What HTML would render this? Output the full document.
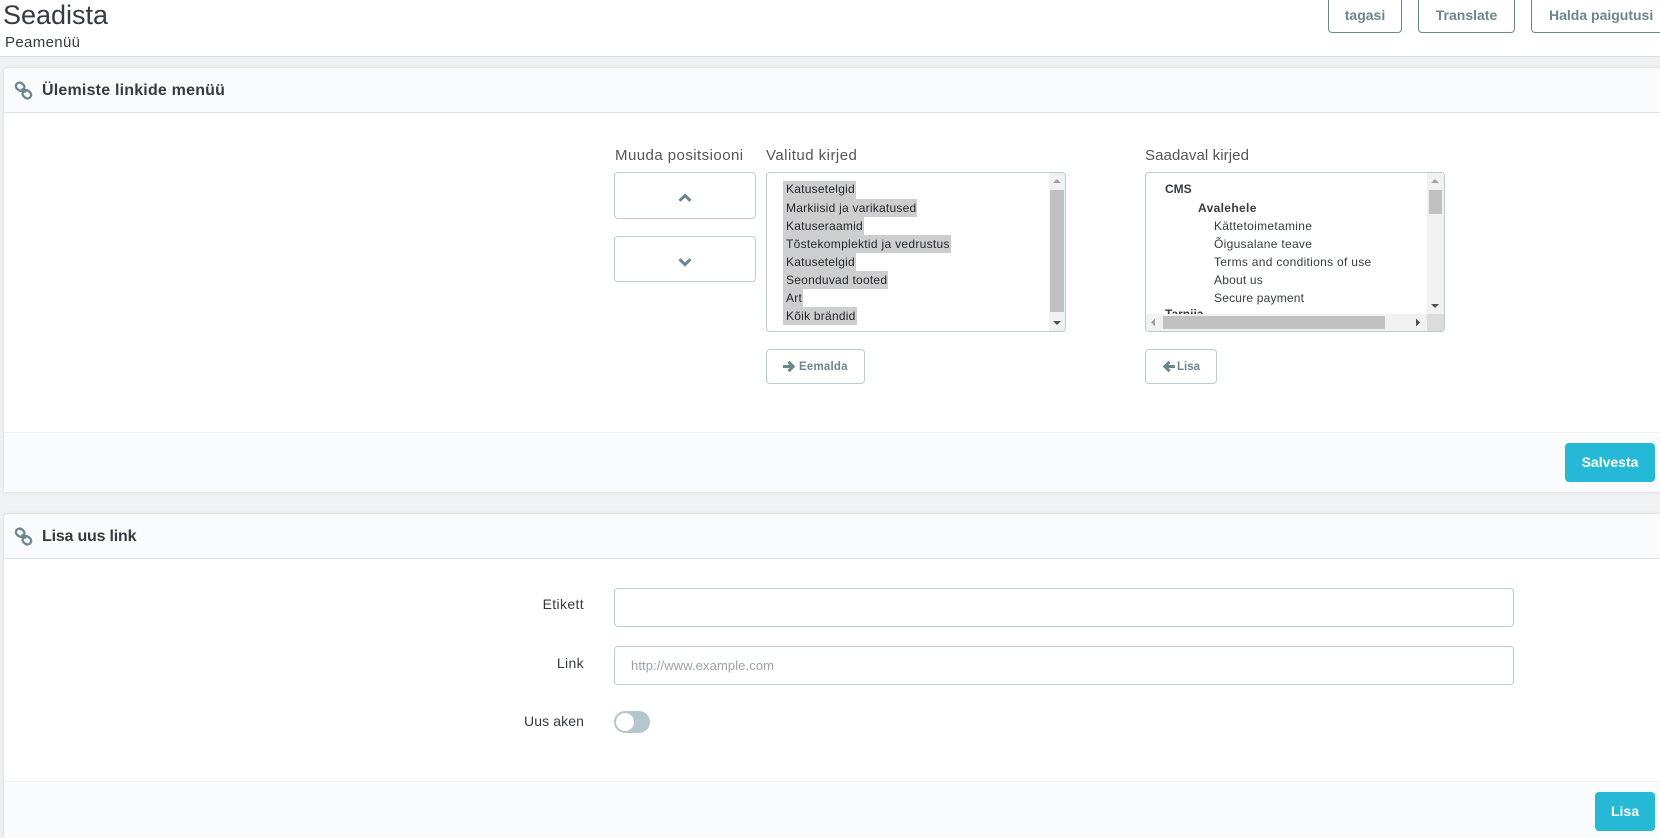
<!DOCTYPE html>
<html lang="et">
<head>
<meta charset="utf-8">
<title>Seadista</title>
<style>
html,body{margin:0;padding:0;width:1660px;height:838px;overflow:hidden;background:#eff1f2;font-family:"Liberation Sans",sans-serif;color:#363a41}
.a{position:absolute;white-space:nowrap}
.box{position:absolute;box-sizing:border-box;background:#fff;border:1px solid #bbcdd2;border-radius:4px}
.sel{position:absolute;white-space:nowrap;line-height:18px;font-size:12px;height:18px;background:#cecece;color:#25272b;padding:0 1px 0 3px;left:783px;letter-spacing:.24px}
.av{position:absolute;white-space:nowrap;line-height:18px;font-size:12px;color:#363a41;letter-spacing:.3px}
.btn{position:absolute;box-sizing:border-box;border:1px solid #6c868e;border-radius:4px;background:#fff;color:#6c868e;font-weight:bold;font-size:14px;text-align:center;white-space:nowrap}
.sm{position:absolute;box-sizing:border-box;border:1px solid #bbcdd2;border-radius:4px;background:#fff;color:#6c868e;font-weight:bold;font-size:11.5px;white-space:nowrap;height:35px;line-height:35px}
.pri{position:absolute;background:#25b9d7;border-radius:4px;color:#fff;font-weight:bold;font-size:14px;text-align:center;height:39px;line-height:39px}
.h{position:absolute;white-space:nowrap;top:146px;font-size:15px;line-height:19px;color:#555}
.l{position:absolute;left:484px;width:100px;text-align:right;white-space:nowrap;font-size:14px;line-height:18px;letter-spacing:.36px}
</style>
</head>
<body>
<div class="a" style="left:0;top:0;width:1660px;height:56px;background:#fff;border-bottom:1px solid #dcdee0"></div>
<div class="a" style="left:3px;top:-3px;font-size:27px;line-height:36px;color:#363a41">Seadista</div>
<div class="a" style="left:5px;top:34px;font-size:15px;line-height:18px;letter-spacing:.35px;color:#363a41">Peamenüü</div>

<div class="btn" style="left:1328px;top:-6px;width:74px;height:39px;line-height:41px">tagasi</div>
<div class="btn" style="left:1418px;top:-6px;width:97px;height:39px;line-height:41px">Translate</div>
<div class="btn" style="left:1531px;top:-6px;width:140px;height:39px;line-height:41px;text-align:left;padding-left:17px">Halda paigutusi</div>

<!-- Panel 1 -->
<div class="a" style="left:4px;top:68px;width:1656px;height:424px;background:#fff;border-radius:4px 0 0 4px;box-shadow:0 0 3px rgba(0,0,0,.12)"></div>
<div class="a" style="left:4px;top:68px;width:1656px;height:44px;background:#fafbfc;border-bottom:1px solid #dbe6e9;border-radius:4px 0 0 0"></div>
<svg class="a" style="left:14px;top:81px" width="19" height="19" viewBox="0 0 20 20"><g fill="none" stroke="#6c868e" stroke-width="2.4"><rect x="1.800" y="2.200" width="9.400" height="7.600" rx="3.800" transform="rotate(38 6.500 6)"/><rect x="8.800" y="10.200" width="9.400" height="7.600" rx="3.800" transform="rotate(38 13.500 14)"/><path d="M8 8l4.500 4"/></g></svg>
<div class="a" style="left:42px;top:80px;font-size:16px;line-height:22px;font-weight:bold;color:#363a41;letter-spacing:.2px">Ülemiste linkide menüü</div>

<div class="h" style="left:615px;letter-spacing:.45px">Muuda positsiooni</div>
<div class="h" style="left:766px;letter-spacing:.47px">Valitud kirjed</div>
<div class="h" style="left:1145px;letter-spacing:.1px">Saadaval kirjed</div>

<div class="box" style="left:614px;top:172px;width:142px;height:47px"></div>
<div class="box" style="left:614px;top:236px;width:142px;height:46px"></div>
<svg class="a" style="left:678px;top:193px" width="14" height="10" viewBox="0 0 14 10"><path d="M1.500 7.800L7 2.500l5.500 5.300" fill="none" stroke="#6c868e" stroke-width="3"/></svg>
<svg class="a" style="left:678px;top:257px" width="14" height="10" viewBox="0 0 14 10"><path d="M1.500 2.200L7 7.500l5.500-5.300" fill="none" stroke="#6c868e" stroke-width="3"/></svg>

<!-- Selected list -->
<div class="box" style="left:766px;top:172px;width:300px;height:160px;overflow:hidden">
  <div class="a" style="left:282px;top:0;width:16px;height:158px;background:#f1f1f1"></div>
  <div class="a" style="left:283px;top:17px;width:14px;height:122px;background:#c1c1c1"></div>
  <svg class="a" style="left:282px;top:0" width="16" height="158" viewBox="0 0 16 158"><path d="M8 6l-4 4h8z" fill="#a3a3a3"/><path d="M4 148h8l-4 4z" fill="#505050"/></svg>
</div>
<div class="sel" style="top:181px;line-height:16px">Katusetelgid</div>
<div class="sel" style="top:199px">Markiisid ja varikatused</div>
<div class="sel" style="top:217px">Katuseraamid</div>
<div class="sel" style="top:235px;letter-spacing:.3px">Tõstekomplektid ja vedrustus</div>
<div class="sel" style="top:253px">Katusetelgid</div>
<div class="sel" style="top:271px">Seonduvad tooted</div>
<div class="sel" style="top:289px">Art</div>
<div class="sel" style="top:307px">Kõik brändid</div>

<div class="sm" style="left:766px;top:349px;width:99px;padding-left:32px;letter-spacing:.2px">Eemalda</div>
<svg class="a" style="left:782px;top:360px" width="14" height="13" viewBox="0 0 14 13"><path d="M1 6.500h10M6.500 1.800l4.700 4.700-4.700 4.700" fill="none" stroke="#6c868e" stroke-width="3"/></svg>

<!-- Available list -->
<div class="box" style="left:1145px;top:172px;width:300px;height:160px;overflow:hidden">
  <div class="a" style="left:19px;top:132px;font-size:12px;line-height:18px;font-weight:bold">Tarnija</div>
  <div class="a" style="left:281px;top:0;width:17px;height:158px;background:#f1f1f1"></div>
  <div class="a" style="left:283px;top:17px;width:13px;height:24px;background:#c1c1c1"></div>
  <div class="a" style="left:0;top:141px;width:298px;height:17px;background:#f1f1f1"></div>
  <div class="a" style="left:17px;top:143px;width:222px;height:13px;background:#c1c1c1"></div>
  <div class="a" style="left:281px;top:141px;width:17px;height:17px;background:#dcdcdc"></div>
  <svg class="a" style="left:0;top:0" width="298" height="158" viewBox="0 0 298 158"><path d="M289 6l-4 4h8z" fill="#a3a3a3"/><path d="M285 131h8l-4 4z" fill="#505050"/><path d="M9 145.500l-4 4 4 4z" fill="#a3a3a3"/><path d="M270 145.500l4 4-4 4z" fill="#505050"/></svg>
</div>
<div class="av" style="left:1165px;top:181px;line-height:16px;font-weight:bold;letter-spacing:0">CMS</div>
<div class="av" style="left:1198px;top:199px;font-weight:bold;letter-spacing:.35px">Avalehele</div>
<div class="av" style="left:1214px;top:217px">Kättetoimetamine</div>
<div class="av" style="left:1214px;top:235px">Õigusalane teave</div>
<div class="av" style="left:1214px;top:253px">Terms and conditions of use</div>
<div class="av" style="left:1214px;top:271px;letter-spacing:.2px">About us</div>
<div class="av" style="left:1214px;top:289px;letter-spacing:.2px">Secure payment</div>

<div class="sm" style="left:1145px;top:349px;width:72px;padding-left:31px">Lisa</div>
<svg class="a" style="left:1162px;top:360px" width="14" height="13" viewBox="0 0 14 13"><path d="M13 6.500H3M7.500 1.800L2.800 6.500l4.700 4.700" fill="none" stroke="#6c868e" stroke-width="3"/></svg>

<div class="a" style="left:4px;top:432px;width:1656px;height:60px;background:#fafbfc;border-top:1px solid #eff1f2;box-sizing:border-box"></div>
<div class="pri" style="left:1565px;top:443px;width:90px">Salvesta</div>

<!-- Panel 2 -->
<div class="a" style="left:4px;top:514px;width:1656px;height:324px;background:#fff;border-radius:4px 0 0 0;box-shadow:0 0 3px rgba(0,0,0,.12)"></div>
<div class="a" style="left:4px;top:514px;width:1656px;height:44px;background:#fafbfc;border-bottom:1px solid #dbe6e9;border-radius:4px 0 0 0"></div>
<svg class="a" style="left:14px;top:527px" width="19" height="19" viewBox="0 0 20 20"><g fill="none" stroke="#6c868e" stroke-width="2.400"><rect x="1.800" y="2.200" width="9.400" height="7.600" rx="3.800" transform="rotate(38 6.500 6)"/><rect x="8.800" y="10.200" width="9.400" height="7.600" rx="3.800" transform="rotate(38 13.500 14)"/><path d="M8 8l4.500 4"/></g></svg>
<div class="a" style="left:42px;top:526px;font-size:16px;line-height:22px;font-weight:bold;color:#363a41;letter-spacing:-.2px">Lisa uus link</div>

<div class="l" style="top:595px">Etikett</div>
<div class="l" style="top:654px">Link</div>
<div class="l" style="top:712px;letter-spacing:.1px">Uus aken</div>

<div class="box" style="left:614px;top:588px;width:900px;height:39px"></div>
<div class="box" style="left:614px;top:646px;width:900px;height:39px"></div>
<div class="a" style="left:631px;top:657px;font-size:13px;line-height:18px;color:#9aa3a7;letter-spacing:.1px">http://www.example.com</div>

<div class="a" style="left:614px;top:711px;width:36px;height:22px;border-radius:11px;background:#b3c7cd"></div>
<div class="a" style="left:616px;top:713px;width:18px;height:18px;border-radius:50%;background:#fff"></div>

<div class="a" style="left:4px;top:781px;width:1656px;height:57px;background:#fafbfc;border-top:1px solid #eff1f2;box-sizing:border-box"></div>
<div class="pri" style="left:1595px;top:792px;width:60px">Lisa</div>
</body>
</html>
